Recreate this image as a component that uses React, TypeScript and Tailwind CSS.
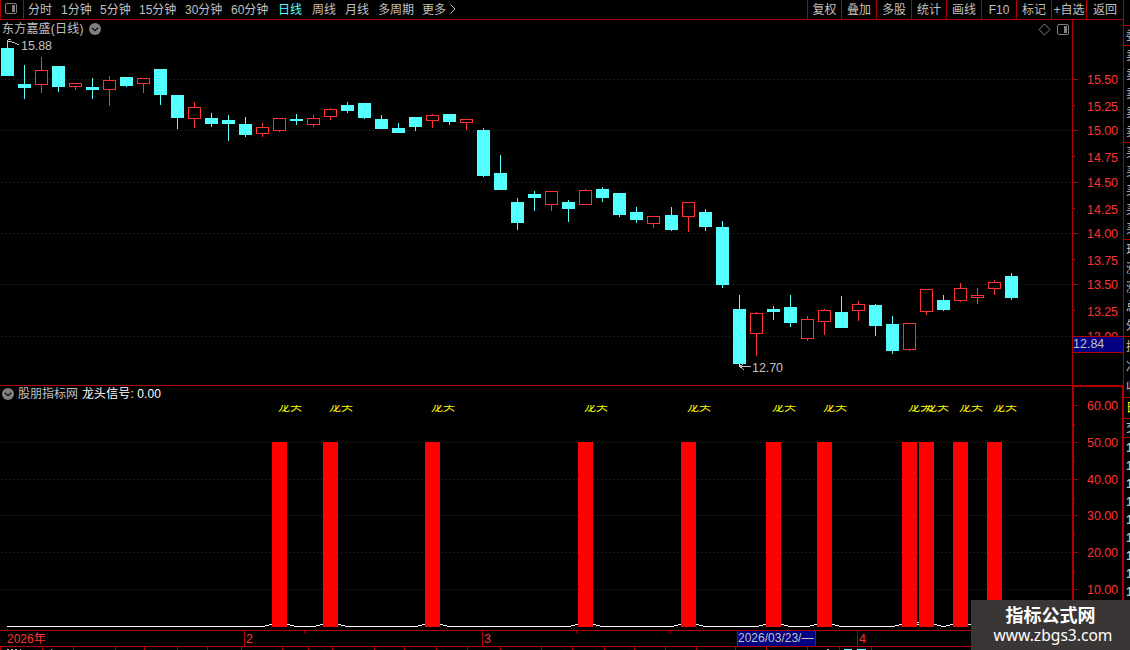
import clsx from 'clsx';

type Candle = [kind: 'up' | 'down', high: number, top: number, bottom: number, low: number];

// y values are chart pixels, one entry per trading day
const candles: Candle[] = [
  ['down', 40, 48, 76, 76],
  ['down', 65, 84, 88, 99],
  ['up', 57, 70, 85, 93],
  ['down', 66, 66, 87, 92],
  ['up', 83, 83, 87, 90],
  ['down', 78, 87, 90, 99],
  ['up', 76, 80, 90, 106],
  ['down', 77, 77, 86, 87],
  ['up', 78, 78, 84, 93],
  ['down', 69, 69, 95, 105],
  ['down', 95, 95, 118, 129],
  ['up', 102, 107, 119, 128],
  ['down', 113, 118, 124, 127],
  ['down', 115, 120, 124, 141],
  ['down', 117, 124, 135, 137],
  ['up', 123, 127, 134, 137],
  ['up', 118, 118, 131, 132],
  ['down', 114, 119, 121, 125],
  ['up', 115, 118, 125, 127],
  ['up', 108, 109, 117, 120],
  ['down', 102, 105, 111, 113],
  ['down', 103, 103, 118, 119],
  ['down', 115, 119, 129, 129],
  ['down', 123, 128, 133, 133],
  ['down', 117, 117, 127, 131],
  ['up', 114, 115, 121, 128],
  ['down', 114, 114, 122, 125],
  ['up', 119, 119, 123, 130],
  ['down', 128, 130, 176, 177],
  ['down', 155, 173, 190, 190],
  ['down', 198, 202, 223, 230],
  ['down', 191, 194, 198, 211],
  ['up', 191, 191, 205, 211],
  ['down', 200, 202, 209, 222],
  ['up', 189, 190, 205, 205],
  ['down', 187, 189, 198, 202],
  ['down', 193, 193, 215, 217],
  ['down', 207, 212, 220, 223],
  ['up', 216, 216, 224, 228],
  ['down', 207, 215, 230, 231],
  ['up', 202, 202, 217, 232],
  ['down', 209, 212, 227, 231],
  ['down', 221, 227, 285, 288],
  ['down', 295, 309, 364, 367],
  ['up', 312, 313, 334, 356],
  ['down', 306, 309, 312, 320],
  ['down', 295, 307, 323, 327],
  ['up', 316, 319, 339, 341],
  ['up', 309, 310, 322, 335],
  ['down', 296, 312, 328, 328],
  ['up', 301, 304, 311, 321],
  ['down', 304, 305, 326, 336],
  ['down', 316, 324, 351, 354],
  ['up', 323, 323, 350, 351],
  ['up', 289, 289, 312, 315],
  ['down', 295, 300, 310, 311],
  ['up', 283, 288, 301, 302],
  ['up', 288, 295, 298, 304],
  ['up', 280, 282, 289, 295],
  ['down', 273, 276, 298, 300],
];

const signals = [16, 19, 25, 34, 40, 45, 48, 53, 54, 56, 58];

const centerX = (i: number) => 7 + 17 * i + (i >= 39 ? 1 : 0);

const periods = [
  { label: '分时', width: 'w-[33px]' },
  { label: '1分钟', width: 'w-[39px]' },
  { label: '5分钟', width: 'w-[39px]' },
  { label: '15分钟', width: 'w-[46px]' },
  { label: '30分钟', width: 'w-[46px]' },
  { label: '60分钟', width: 'w-[47px]' },
  { label: '日线', width: 'w-[34px]', active: true },
  { label: '周线', width: 'w-[33px]' },
  { label: '月线', width: 'w-[33px]' },
  { label: '多周期', width: 'w-[44px]' },
  { label: '更多', width: 'w-[27px]' },
];

const tools = [
  { label: '复权', width: 'w-[34px]' },
  { label: '叠加', width: 'w-[35px]' },
  { label: '多股', width: 'w-[35px]' },
  { label: '统计', width: 'w-[35px]' },
  { label: '画线', width: 'w-[35px]' },
  { label: 'F10', width: 'w-[35px]' },
  { label: '标记', width: 'w-[35px]' },
  { label: '+自选', width: 'w-[35px]' },
  { label: '返回', width: 'w-[37px]' },
];

const priceLabels = [
  { text: '15.50', y: 79, major: true },
  { text: '15.25', y: 105, labelY: 106 },
  { text: '15.00', y: 130, major: true },
  { text: '14.75', y: 156, labelY: 157 },
  { text: '14.50', y: 182, major: true },
  { text: '14.25', y: 208, labelY: 209 },
  { text: '14.00', y: 233, major: true },
  { text: '13.75', y: 259, labelY: 260 },
  { text: '13.50', y: 284, major: true },
  { text: '13.25', y: 310, labelY: 311 },
  { text: '13.00', y: 336, major: true },
];

const volumeLabels = [
  { text: '60.00', y: 405 },
  { text: '50.00', y: 442 },
  { text: '40.00', y: 479 },
  { text: '30.00', y: 515 },
  { text: '20.00', y: 552 },
  { text: '10.00', y: 589 },
];

function PanelIcon() {
  return (
    <svg width="12" height="11" viewBox="0 0 12 11">
      <rect x="0.5" y="0.5" width="11" height="10" rx="1.5" fill="none" stroke="#808080" />
      <rect x="7" y="2" width="3" height="7" fill="#808080" />
    </svg>
  );
}

function ChevronBadge() {
  return (
    <svg width="12" height="12" viewBox="0 0 12 12">
      <circle cx="6" cy="6" r="6" fill="#808080" />
      <path d="M2.8 4.7 6 7.6 9.2 4.7" fill="none" stroke="#111" strokeWidth="1.3" />
    </svg>
  );
}

function TopBar() {
  return (
    <div className="flex h-5 items-center border-b border-[#b00000] text-[#c0c0c0]">
      <div className="flex h-full w-6 shrink-0 items-center border-x border-[#b00000] pb-0.5 pl-1">
        <PanelIcon />
      </div>
      <div className="flex pl-1 pt-px">
        {periods.map((p) => (
          <span key={p.label} className={clsx('whitespace-nowrap', p.width, p.active && 'text-[#54ffff]')}>
            {p.label}
          </span>
        ))}
      </div>
      <svg width="7" height="10" viewBox="0 0 7 10" className="mb-0.5">
        <path d="M1.5 0.5 6 5 1.5 9.5" fill="none" stroke="#c0c0c0" />
      </svg>
      <div className="ml-auto flex h-full">
        {tools.map((t) => (
          <span
            key={t.label}
            className={clsx(
              'flex items-center justify-center whitespace-nowrap border-l border-[#b00000] pt-px',
              t.width,
            )}
          >
            {t.label}
          </span>
        ))}
      </div>
    </div>
  );
}

function GridLine({ y }: { y: number }) {
  return <path d={`M1 ${y + 0.5}H1072`} stroke="#b00000" strokeDasharray="1 3" />;
}

function PriceChart() {
  return (
    <svg width="1072" height="365" viewBox="0 20 1072 365" shapeRendering="crispEdges" className="block">
      {priceLabels.filter((l) => l.major).map((l) => <GridLine key={l.y} y={l.y} />)}
      {candles.map(([kind, high, top, bottom, low], i) => {
        const x = centerX(i);
        if (kind === 'down') {
          return (
            <g key={i} fill="#54ffff">
              <rect x={x} y={high} width="1" height={low - high} />
              <rect x={x - 6} y={top} width="13" height={bottom - top} />
            </g>
          );
        }
        return (
          <g key={i} fill="#ff3232">
            <rect x={x} y={high} width="1" height={low - high} />
            <rect x={x - 5.5} y={top + 0.5} width="12" height={bottom - top - 1} fill="#000" stroke="#ff3232" />
          </g>
        );
      })}
      {/* high and low markers */}
      <g stroke="#c0c0c0" fill="none">
        <path d="M8 39.5H11M7.5 40V45M8 41.5H12M12 42.5H15M15 43.5H17M17 44.5H19" />
        <path d="M740 366.5H751M744 363 740 366.5 744 370" />
      </g>
      <g fill="#c0c0c0" className="text-[12.5px]">
        <text x="21" y="50" textLength="31">15.88</text>
        <text x="752" y="372" textLength="31">12.70</text>
      </g>
      <path d="M1039 29.5 1044.5 24 1050 29.5 1044.5 35Z" fill="none" stroke="#808080" shapeRendering="auto" />
      <g shapeRendering="auto">
        <rect x="1057.5" y="24.5" width="11" height="10" rx="1.5" fill="none" stroke="#808080" />
        <rect x="1064" y="26" width="3" height="7" fill="#808080" />
      </g>
    </svg>
  );
}

function PriceAxis() {
  return (
    <div className="relative h-[365px] w-[51px] border-l border-[#b00000]">
      <svg width="50" height="365" viewBox="1073 20 50 365" shapeRendering="crispEdges" className="block">
        {priceLabels.map((l) => (
          <g key={l.text}>
            <path d={`M1073 ${l.y + 0.5}h${l.major ? 5 : 2}`} stroke="#b00000" />
            <text x="1087" y={(l.labelY ?? l.y) + 5} textLength="31" fill="#ff3232" className="text-[12.5px]">
              {l.text}
            </text>
          </g>
        ))}
      </svg>
      <div className="absolute inset-x-0 top-[316px] flex h-[17px] items-center border-y border-[#b00000] bg-[#000080] pb-0.5 text-[12.5px] text-[#c0c0c0]">
        12.84
      </div>
    </div>
  );
}

function SignalChart() {
  return (
    <svg width="1072" height="222" viewBox="0 408 1072 222" shapeRendering="crispEdges" className="block overflow-visible">
      {volumeLabels.slice(1).map((l) => <GridLine key={l.y} y={l.y} />)}
      <path d="M7 626.5H1011" stroke="#fff" />
      {signals.map((i) => {
        const x = centerX(i);
        return (
          <g key={i}>
            <rect x={x - 14} y="626" width="29" height="1" fill="#000" />
            <path d={`M${x - 14} 625.5h4M${x + 11} 625.5h4M${x - 10} 624.5h3M${x + 8} 624.5h3`} stroke="#fff" />
          </g>
        );
      })}
      {signals.map((i) => (
        <rect key={i} x={centerX(i) - 7} y="442" width="15" height="185" fill="#f00" />
      ))}
      <path d="M917 622.5H919" stroke="#fff" />
      {/* the labels are cut by the top edge of the plot */}
      {signals.map((i) => (
        <svg key={i} x={centerX(i) - 1} y="405" width="26" height="8" overflow="hidden">
          <text x="0" y="5.5" fill="#ff0" className="text-[12px]">龙头</text>
        </svg>
      ))}
    </svg>
  );
}

function SignalAxis() {
  return (
    <div className="h-[245px] w-[52px] border-x-2 border-t-2 border-[#b00000]">
      <svg width="48" height="243" viewBox="1074 387 48 243" shapeRendering="crispEdges" className="block">
        {volumeLabels.map((l) => (
          <g key={l.text}>
            <path d={`M1074 ${l.y + 0.5}h4M1074 ${l.y + 19}h1`} stroke="#b00000" />
            <text x="1087" y={l.y + 5} textLength="31" fill="#ff3232" className="text-[12.5px]">
              {l.text}
            </text>
          </g>
        ))}
      </svg>
    </div>
  );
}

function DateAxis() {
  return (
    <div className="relative flex h-[17px] border-y border-[#b00000] text-[12.5px] leading-[17px] text-[#ff3232]">
      <div className="w-[244px] pl-[7px] text-[12px]">2026年</div>
      <div className="w-[238px] border-l border-[#b00000] pl-px">2</div>
      <div className="w-[255px] border-l border-[#b00000] pl-px">3</div>
      <div className="w-[79px] overflow-hidden whitespace-nowrap border-x border-[#b00000] bg-[#000080] text-[12px] leading-[15px] text-[#c0c0c0]">
        2026/03/23/—
      </div>
      <div className="w-[41px]" />
      <div className="flex-1 border-l border-[#b00000] pl-px">4</div>
      <div className="absolute left-[304px] top-0 h-0.5 w-px bg-[#b00000]" />
      <div className="absolute left-[576px] top-0 h-0.5 w-px bg-[#b00000]" />
      <div className="absolute left-[670px] top-0 h-0.5 w-px bg-[#b00000]" />
    </div>
  );
}

const footerCells = [0, 42, 73, 115, 144, 177, 207, 241, 282, 308, 332, 374, 404, 436, 467, 500, 541, 572, 604, 634, 665, 696, 735, 766, 807, 839, 871];

function Footer() {
  return (
    <svg width="1123" height="3" viewBox="0 0 1123 3" shapeRendering="crispEdges" className="block">
      {footerCells.map((x) => (
        <rect key={x} x={x} y="0" width="1" height="3" fill="#b00000" />
      ))}
      <path d="M7 2.5h2M11 2.5h2M15 2.5h2M20 2.5h1M51 2.5h1M827 2.5h2" stroke="#c0c0c0" />
      <path d="M844 2.5h8M857 2.5h9" stroke="#54ffff" />
    </svg>
  );
}

const quoteGroups = [
  { rows: ['委'], height: 'h-5', color: 'text-[#c0c0c0]' },
  { rows: ['卖', '卖', '卖', '卖', '卖'], height: 'h-[97px]', color: 'text-[#c0c0c0]' },
  { rows: ['买', '买', '买', '买', '买'], height: 'h-[97px]', color: 'text-[#c0c0c0]' },
  { rows: ['现', '涨', '涨', '总', '外'], height: 'h-[97px]', color: 'text-[#c0c0c0]' },
  { rows: ['换', '净', '收'], height: 'h-[61px]', color: 'text-[#c0c0c0]' },
  { rows: ['日'], height: 'h-[21px]', color: 'text-[#ff0]' },
  { rows: ['交'], height: 'h-[19px]', color: 'text-[#c0c0c0]' },
];

// only the left edge of the quote panel is in view
function QuoteStrip() {
  return (
    <div className="h-[650px] w-[7px] shrink-0 overflow-hidden border-l border-[#b00000] pt-[25px]">
      {quoteGroups.map((g, i) => (
        <div key={i} className={clsx('flex flex-col justify-around border-t border-[#b00000] pl-0.5', g.height, g.color)}>
          {g.rows.map((row, j) => (
            <span key={j} className="w-3 leading-none">{row}</span>
          ))}
        </div>
      ))}
      <div className="flex flex-col border-t border-[#b00000] pl-0.5 pt-[3px] text-[#c0c0c0]">
        {[...Array(11)].map((_, i) => (
          <span key={i} className="h-[18px] text-[13px] font-bold leading-none">1</span>
        ))}
      </div>
    </div>
  );
}

function Watermark() {
  return (
    <div className="absolute bottom-0 right-0 flex h-[50px] w-[159px] flex-col items-center bg-[#3b3636] pt-[6px] text-white">
      <div className="text-[18px] font-bold leading-[20px]">指标公式网</div>
      <div className="pl-[5px] font-['Noto_Sans'] text-[15.6px] leading-[19px]">www.zbgs3.com</div>
    </div>
  );
}

export default function App() {
  return (
    <div className="relative flex h-[650px] w-[1130px] overflow-hidden bg-black font-['Liberation_Sans','Noto_Sans_CJK_SC',sans-serif] text-[12px] leading-4">
      <div className="w-[1123px] shrink-0">
        <TopBar />
        <div className="flex">
          <div className="relative w-[1072px]">
            <PriceChart />
            <div className="absolute left-0.5 top-px flex items-center gap-[5px] text-[#c0c0c0]">
              <span className="w-[82px] whitespace-nowrap tracking-[0.2px]">东方嘉盛(日线)</span>
              <ChevronBadge />
            </div>
          </div>
          <PriceAxis />
        </div>
        <div className="flex h-[245px]">
          <div className="w-[1072px] border-t border-[#b00000]">
            <div className="flex h-[22px] items-center pb-[6px] pl-0.5">
              <ChevronBadge />
              <span className="ml-[4px] text-[#c0c0c0]">股朋指标网</span>
              <span className="ml-[4px] tracking-[0.1px] text-white">龙头信号: 0.00</span>
            </div>
            <SignalChart />
          </div>
          <SignalAxis />
        </div>
        <DateAxis />
        <Footer />
      </div>
      <QuoteStrip />
      <Watermark />
    </div>
  );
}
